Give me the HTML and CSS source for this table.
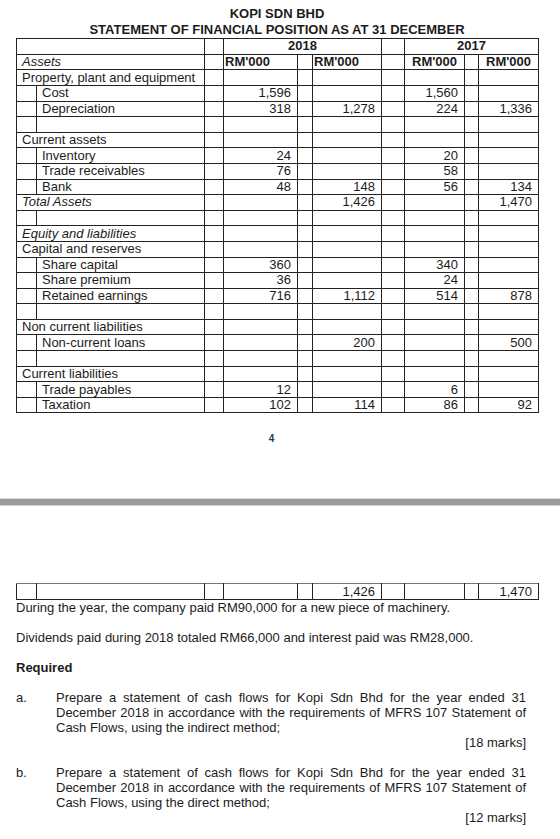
FILE: index.html
```html
<!DOCTYPE html>
<html lang="en">
<head>
  <meta charset="UTF-8" />
  <title>Kopi Sdn Bhd - Statement of Financial Position</title>
  <link rel="stylesheet" href="styles.css">
</head>
<body>
  <div class="sheet">
    <h1 class="title">KOPI SDN BHD<br>STATEMENT OF FINANCIAL POSITION AS AT 31 DECEMBER</h1>
    <table class="sofp" id="sofp"></table>
    <div class="page-num">4</div>
  </div>

  <div class="page-gap"></div>

  <div class="sheet sheet-next">
    <table class="sofp" id="sofp-carry"></table>

    <p class="note">During the year, the company paid RM90,000 for a new piece of machinery.</p>
    <p class="note gap">Dividends paid during 2018 totaled RM66,000 and interest paid was RM28,000.</p>
    <p class="note gap required">Required</p>

    <div class="item gap">
      <span class="item-label">a.</span>
      <p class="item-text">Prepare a statement of cash flows for Kopi Sdn Bhd for the year ended 31 December 2018 in accordance with the requirements of MFRS 107 Statement of Cash Flows, using the indirect method;</p>
    </div>
    <div class="marks">[18 marks]</div>

    <div class="item gap">
      <span class="item-label">b.</span>
      <p class="item-text">Prepare a statement of cash flows for Kopi Sdn Bhd for the year ended 31 December 2018 in accordance with the requirements of MFRS 107 Statement of Cash Flows, using the direct method;</p>
    </div>
    <div class="marks">[12 marks]</div>
  </div>

  <script>
    // a, b = 2018 columns, c, d = 2017 columns
    const rows = [
      { label: 'Property, plant and equipment' },
      { sub: 'Cost', a: '1,596', c: '1,560' },
      { sub: 'Depreciation', a: '318', b: '1,278', c: '224', d: '1,336' },
      { sub: '' },
      { label: 'Current assets' },
      { sub: 'Inventory', a: '24', c: '20' },
      { sub: 'Trade receivables', a: '76', c: '58' },
      { sub: 'Bank', a: '48', b: '148', c: '56', d: '134' },
      { label: 'Total Assets', italic: true, b: '1,426', d: '1,470' },
      { sub: '' },
      { label: 'Equity and liabilities', italic: true },
      { label: 'Capital and reserves' },
      { sub: 'Share capital', a: '360', c: '340' },
      { sub: 'Share premium', a: '36', c: '24' },
      { sub: 'Retained earnings', a: '716', b: '1,112', c: '514', d: '878' },
      { sub: '' },
      { label: 'Non current liabilities' },
      { sub: 'Non-current loans', b: '200', d: '500' },
      { sub: '' },
      { label: 'Current liabilities' },
      { sub: 'Trade payables', a: '12', c: '6' },
      { sub: 'Taxation', a: '102', b: '114', c: '86', d: '92' }
    ];

    const colgroup = `<colgroup>
      <col class="c-indent"><col class="c-label"><col class="c-gap1">
      <col class="c-a"><col class="c-gap2"><col class="c-b">
      <col class="c-gap3"><col class="c-c"><col class="c-gap4"><col class="c-d">
    </colgroup>`;

    function buildRow(row) {
      let first;
      if (row.sub !== undefined) {
        first = `<td></td><td class="label">${row.sub}</td>`;
      } else {
        const cls = row.italic ? 'label italic' : 'label';
        first = `<td colspan="2" class="${cls}">${row.label}</td>`;
      }
      return `<tr>${first}
        <td></td><td class="num">${row.a || ''}</td>
        <td></td><td class="num">${row.b || ''}</td>
        <td></td><td class="num">${row.c || ''}</td>
        <td></td><td class="num">${row.d || ''}</td>
      </tr>`;
    }

    let html = colgroup + `
      <tr>
        <td colspan="2"></td><td></td>
        <td colspan="3" class="year">2018</td>
        <td></td>
        <td colspan="3" class="year">2017</td>
      </tr>
      <tr>
        <td colspan="2" class="label italic">Assets</td><td></td>
        <td class="unit">RM'000</td><td></td>
        <td class="unit">RM'000</td><td></td>
        <td class="unit center">RM'000</td><td></td>
        <td class="unit center">RM'000</td>
      </tr>`;

    rows.forEach(row => { html += buildRow(row); });
    document.getElementById('sofp').innerHTML = html;

    // carried-over totals row at the top of the next page
    document.getElementById('sofp-carry').innerHTML =
      colgroup + buildRow({ sub: '', b: '1,426', d: '1,470' });
  </script>
</body>
</html>
```

FILE: styles.css
```css
body {
  margin: 0;
  font-family: "Liberation Sans", Arial, sans-serif;
  font-size: 13px;
  color: #1c1c1c;
  background: #fff;
}

.sheet {
  padding: 6px 0 0 16px;
}

.title {
  width: 522px;
  margin: 0 0 1px;
  font-size: 13px;
  font-weight: bold;
  line-height: 15.6px;
  text-align: center;
}

.sofp {
  width: 522px;
  table-layout: fixed;
  border-collapse: collapse;
}

.sofp td {
  height: 14.6px;
  padding: 0;
  border: 1px solid #222;
  line-height: 14px;
  white-space: nowrap;
  overflow: hidden;
}

.c-indent { width: 20px; }
.c-label { width: 168px; }
.c-gap1 { width: 19px; }
.c-a { width: 74px; }
.c-gap2 { width: 15px; }
.c-b { width: 69px; }
.c-gap3 { width: 23px; }
.c-c { width: 60px; }
.c-gap4 { width: 14px; }
.c-d { width: 60px; }

.sofp td.label {
  padding-left: 5px;
}

.sofp td.italic {
  font-style: italic;
}

.sofp td.num {
  text-align: right;
  padding-right: 6px;
}

.sofp td.year {
  text-align: center;
  font-weight: bold;
}

.sofp td.unit {
  font-weight: bold;
  padding-left: 1px;
}

.sofp td.unit.center {
  text-align: center;
  padding-left: 0;
}

.page-num {
  width: 511px;
  margin-top: 19px;
  font-size: 10px;
  font-weight: bold;
  line-height: 14px;
  text-align: center;
  color: #2a3a55;
}

.page-gap {
  height: 6px;
  margin-top: 52px;
  background: #9b9b9b;
  border-top: 1px solid #dadada;
  border-bottom: 1px solid #cfcfcf;
}

.sheet-next {
  padding-top: 77px;
  width: 510px;
}

.sheet-next .sofp td {
  border-top-color: #777;
}

.note {
  margin: 0;
  line-height: 15px;
}

.gap {
  margin-top: 15px;
}

.required {
  font-weight: bold;
}

.item {
  display: flex;
}

.item-label {
  width: 40px;
  flex: none;
  line-height: 15px;
}

.item-text {
  margin: 0;
  width: 470px;
  line-height: 15px;
  text-align: justify;
}

.marks {
  text-align: right;
  line-height: 15px;
}
```
